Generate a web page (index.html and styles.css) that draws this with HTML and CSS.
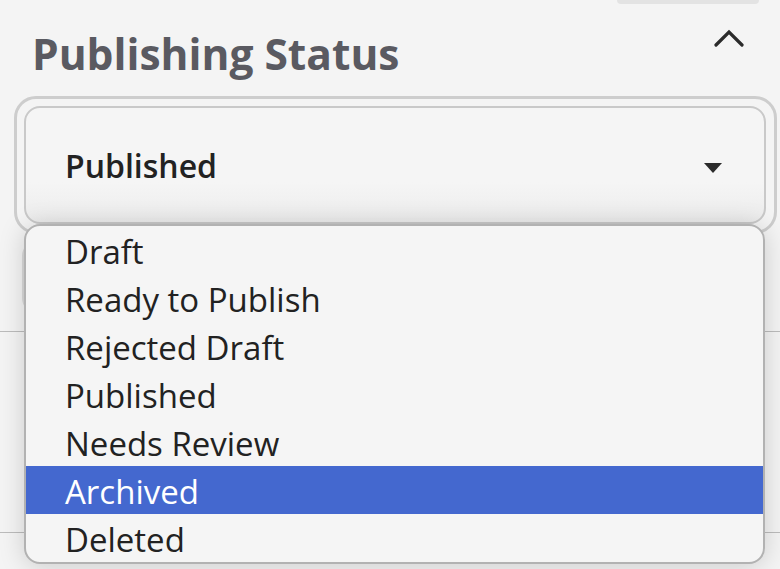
FILE: index.html
```html
<!DOCTYPE html>
<html lang="en">
<head>
<meta charset="utf-8">
<title>Publishing Status</title>
<link rel="stylesheet" href="styles.css">
</head>
<body>
<div class="page">
  <div class="top-bar"><div class="pill"></div></div>
  <div class="header">
    <h2 class="title">Publishing Status</h2>
    <svg class="chevron" width="30" height="18" viewBox="0 0 30 18"><polyline points="2,16 15,3 28,16" fill="none" stroke="#2b2b2b" stroke-width="3.2" stroke-linecap="round" stroke-linejoin="miter"/></svg>
  </div>
  <div class="select-ring">
    <div class="select-box">
      <span class="select-value">Published</span>
      <svg class="caret" width="18" height="10" viewBox="0 0 18 10"><polygon points="0,0 18,0 9,10" fill="#2b2b2b"/></svg>
    </div>
  </div>
  <div class="behind">
    <div class="ghost-input"></div>
    <div class="divider first"></div>
    <div class="divider second"></div>
  </div>
  <ul class="listbox">
    <li class="option">Draft</li>
    <li class="option">Ready to Publish</li>
    <li class="option">Rejected Draft</li>
    <li class="option">Published</li>
    <li class="option">Needs Review</li>
    <li class="option selected">Archived</li>
    <li class="option">Deleted</li>
  </ul>
</div>
</body>
</html>
```
FILE: styles.css
```css
html, body {
  margin: 0;
  padding: 0;
  background: #f4f4f4;
}
body {
  width: 780px;
  height: 569px;
  overflow: hidden;
  font-family: "Open Sans", "Noto Sans", sans-serif;
}
.page {
  position: relative;
  width: 780px;
  height: 569px;
}
.top-bar {
  display: flex;
  justify-content: flex-end;
  padding-right: 21px;
}
.pill {
  width: 142px;
  height: 4px;
  background: #e3e3e3;
  border-radius: 0 0 8px 8px;
}
.header {
  display: flex;
  justify-content: space-between;
  align-items: flex-start;
  margin-top: 26px;
  padding-left: 32px;
  padding-right: 36px;
}
.title {
  margin: 0;
  font-size: 42.5px;
  line-height: 48px;
  font-weight: 700;
  color: #5a5a61;
  letter-spacing: 0;
}
.chevron {
  display: block;
  margin-top: -1px;
}
.select-ring {
  margin: 18px 3px 0 14px;
  border: 3px solid #cdcdcd;
  border-radius: 22px;
  padding: 7px 8px 7px 7px;
}
.select-box {
  height: 114px;
  border: 2px solid #c9c9c9;
  border-radius: 16px;
  background: linear-gradient(#f5f5f5 0%, #f5f5f5 65%, #ececec 100%);
  display: flex;
  align-items: center;
  justify-content: space-between;
  padding: 0 42px 0 39px;
}
.select-value {
  font-size: 32px;
  font-weight: 600;
  color: #222222;
  line-height: 40px;
  margin-top: 2px;
}
.caret {
  display: block;
  margin-top: 6px;
}
.behind {
  padding-top: 6px;
}
.ghost-input {
  margin-left: 22px;
  width: 300px;
  height: 70px;
  border: 2px solid #dadada;
  border-radius: 16px;
}
.divider {
  height: 1px;
  background: #bcbcbc;
}
.divider.first {
  margin-top: 17px;
}
.divider.second {
  margin-top: 200px;
}
.listbox {
  position: absolute;
  left: 24px;
  top: 224px;
  width: 737px;
  margin: 0;
  padding: 0;
  list-style: none;
  background: #f5f5f5;
  border: 2px solid #b2b2b2;
  border-radius: 16px;
  overflow: hidden;
  box-shadow: 0 2px 26px rgba(0, 0, 0, 0.17);
}
.option {
  box-sizing: border-box;
  height: 48px;
  padding-top: 4px;
  line-height: 44px;
  padding-left: 39px;
  font-size: 33px;
  color: #222222;
  white-space: nowrap;
}
.option.selected {
  background: #4468cf;
  color: #ffffff;
}
```
